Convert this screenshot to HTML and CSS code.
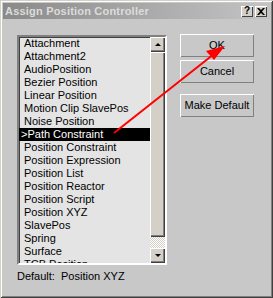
FILE: index.html
```html
<!DOCTYPE html>
<html>
<head>
<meta charset="utf-8">
<link rel="stylesheet" href="styles.css">
</head>
<body>
<div class="window">
  <div class="titlebar">
    <span class="title">Assign Position Controller</span>
    <div class="caption-btns">
      <span class="cbtn">?</span>
      <span class="cbtn close">
        <svg width="8" height="7" viewBox="0 0 8 7"><path d="M0 0h2l2 2 2-2h2L5 3.5 8 7H6L4 5 2 7H0l3-3.5z" fill="#000"/></svg>
      </span>
    </div>
  </div>
  <div class="content">
    <div class="left">
      <div class="listbox">
        <ul class="items">
          <li>Attachment</li>
          <li>Attachment2</li>
          <li>AudioPosition</li>
          <li>Bezier Position</li>
          <li>Linear Position</li>
          <li>Motion Clip SlavePos</li>
          <li>Noise Position</li>
          <li class="sel">&gt;Path Constraint</li>
          <li>Position Constraint</li>
          <li>Position Expression</li>
          <li>Position List</li>
          <li>Position Reactor</li>
          <li>Position Script</li>
          <li>Position XYZ</li>
          <li>SlavePos</li>
          <li>Spring</li>
          <li>Surface</li>
          <li>TCB Position</li>
        </ul>
        <div class="scrollbar">
          <div class="sbtn"><span class="tri up"></span></div>
          <div class="thumb"></div>
          <div class="track"></div>
          <div class="sbtn"><span class="tri down"></span></div>
        </div>
      </div>
      <div class="default">Default:&nbsp; Position XYZ</div>
    </div>
    <div class="right">
      <div class="btn">OK</div>
      <div class="btn">Cancel</div>
      <div class="btn gap">Make Default</div>
    </div>
  </div>
  <svg class="arrow" width="273" height="298" viewBox="0 0 273 298">
    <line x1="114" y1="133" x2="214" y2="54" stroke="#ff0000" stroke-width="2"/>
    <polygon points="225,46 206,51 214,60" fill="#ff0000"/>
  </svg>
</div>
</body>
</html>
```

FILE: styles.css
```css
html, body {
  margin: 0;
  padding: 0;
  background: #c8c8c8;
}
.window {
  position: relative;
  width: 273px;
  height: 298px;
  box-sizing: border-box;
  padding: 3px;
  background: #c8c8c8;
  box-shadow: inset 1px 1px 0 #d4d0c8, inset -1px -1px 0 #404040, inset 2px 2px 0 #ffffff, inset -2px -2px 0 #808080;
  font-family: "Liberation Sans", Arial, sans-serif;
  font-size: 11px;
  color: #000;
}
.titlebar {
  height: 16px;
  display: flex;
  align-items: center;
  justify-content: space-between;
  background: linear-gradient(to right, #8a8a8a, #c4c4c4);
  padding: 0 3px 0 2px;
}
.title {
  font-weight: bold;
  font-size: 11px;
  color: #dcdcdc;
  letter-spacing: 0.2px;
}
.caption-btns {
  display: flex;
  gap: 2px;
}
.cbtn {
  width: 12px;
  height: 11px;
  box-sizing: border-box;
  background: #d4d0c8;
  box-shadow: inset 1px 1px 0 #ffffff, inset -1px -1px 0 #404040;
  display: flex;
  align-items: center;
  justify-content: center;
  font-size: 10px;
  font-weight: bold;
  line-height: 1;
}
.content {
  display: flex;
  padding: 16px 0 0 14px;
}
.left {
  display: flex;
  flex-direction: column;
}
.listbox {
  width: 150px;
  height: 230px;
  box-sizing: border-box;
  border: 2px solid;
  border-color: #808080 #ffffff #ffffff #808080;
  box-shadow: inset 1px 1px 0 #404040;
  background: #e4e4e4;
  display: flex;
  overflow: hidden;
}
.items {
  list-style: none;
  margin: 0;
  padding: 0;
  flex: 1;
  overflow: hidden;
}
.items li {
  height: 13px;
  line-height: 13px;
  padding-left: 5px;
  white-space: nowrap;
}
.items li.sel {
  background: #000;
  color: #fff;
  padding-left: 2px;
}
.scrollbar {
  width: 15px;
  display: flex;
  flex-direction: column;
}
.sbtn {
  height: 15px;
  box-sizing: border-box;
  background: #d4d0c8;
  box-shadow: inset 1px 1px 0 #ffffff, inset -1px -1px 0 #404040, inset -2px -2px 0 #808080;
  display: flex;
  align-items: center;
  justify-content: center;
}
.thumb {
  height: 185px;
  background: #d4d0c8;
  box-shadow: inset 1px 1px 0 #ffffff, inset -1px -1px 0 #404040, inset -2px -2px 0 #808080;
}
.track {
  flex: 1;
  background-color: #ffffff;
  background-image: repeating-conic-gradient(#d4d0c8 0 25%, #ffffff 0 50%);
  background-size: 2px 2px;
}
.tri {
  width: 0;
  height: 0;
  border-left: 3px solid transparent;
  border-right: 3px solid transparent;
}
.tri.up {
  border-bottom: 3px solid #000;
}
.tri.down {
  border-top: 3px solid #000;
}
.default {
  margin-top: 5px;
  height: 13px;
  line-height: 13px;
}
.right {
  display: flex;
  flex-direction: column;
  margin-left: 13px;
  margin-top: -1px;
  gap: 3px;
}
.btn {
  width: 74px;
  height: 23px;
  box-sizing: border-box;
  box-shadow: inset 1px 1px 0 #ffffff, inset -1px -1px 0 #808080;
  display: flex;
  align-items: center;
  justify-content: center;
  line-height: 1;
}
.btn.gap {
  margin-top: 8px;
}
.arrow {
  position: absolute;
  left: 0;
  top: 0;
  pointer-events: none;
}
```
